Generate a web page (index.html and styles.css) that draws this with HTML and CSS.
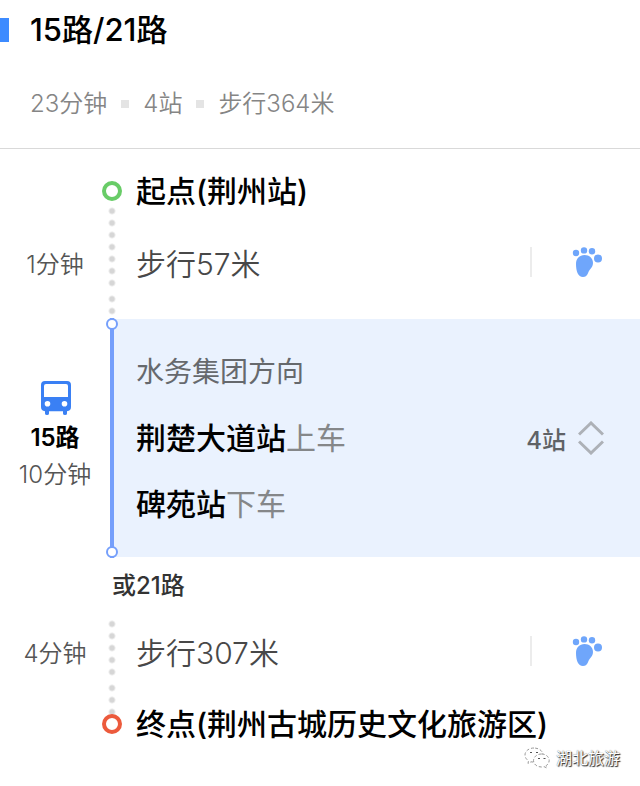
FILE: index.html
```html
<!DOCTYPE html>
<html lang="zh-CN">
<head>
    <meta charset="UTF-8">
    <meta name="viewport" content="width=device-width, initial-scale=1.0">
    <title>15路/21路</title>
    <link rel="stylesheet" href="styles.css">
</head>
<body>
    <header class="summary">
        <h1 class="title">15路/21路</h1>
        <ul class="facts">
            <li>23分钟</li>
            <li>4站</li>
            <li>步行364米</li>
        </ul>
    </header>

    <main class="route">
        <!-- Walk to the first stop -->
        <section class="leg leg-start">
            <div class="track">
                <span class="ring ring-start"></span>
                <span class="dots dots-7"></span>
                <span class="dots dots-2"></span>
            </div>
            <h2 class="place">起点(荆州站)</h2>
            <span class="time">1分钟</span>
            <div class="walk">
                <span>步行57米</span>
                <button type="button" class="foot" aria-label="步行57米">
                    <svg width="32" height="32" viewBox="0 0 32 32">
                        <circle cx="4" cy="7" r="3.2"/>
                        <circle cx="12" cy="4.4" r="3.2"/>
                        <circle cx="20" cy="5.2" r="3.2"/>
                        <circle cx="26" cy="12.4" r="4"/>
                        <path d="M12.5 9C17.5 9 21 12.3 21 17C21 20 19.5 21.8 17.8 23.8C15.8 26 16 31 11 31C6 31 4 25 4 18C4 12.5 7.5 9 12.5 9Z"/>
                    </svg>
                </button>
            </div>
        </section>

        <!-- Bus ride -->
        <section class="ride">
            <div class="line">
                <svg width="32" height="34" viewBox="-1 0 32 34">
                    <path fill-rule="evenodd" d="M5 0H27Q31 0 31 4V26Q31 30 27 30.200V32.500Q27 34 25 34Q23 34 23 32.500V30.200H9V32.500Q9 34 7 34Q5 34 5 32.500V30.200Q1 30 1 26V4Q1 0 5 0ZM6 3Q4 3 4 5V16H28V5Q28 3 26 3ZM7.500 20A2.800 2.800 0 1 0 7.500 25.600A2.800 2.800 0 1 0 7.500 20ZM24.500 20A2.800 2.800 0 1 0 24.500 25.600A2.800 2.800 0 1 0 24.500 20Z"/>
                </svg>
                <strong>15路</strong>
                <span>10分钟</span>
            </div>
            <div class="panel">
                <div class="stops">
                    <p class="direction">水务集团方向</p>
                    <p><b>荆楚大道站</b>上车</p>
                    <p><b>碑苑站</b>下车</p>
                </div>
                <button type="button" class="expand">
                    4站
                    <svg width="26" height="34" viewBox="0 0 26 34">
                        <path d="M1 13.500L13 2L25 13.500M1 20.500L13 32L25 20.500"/>
                    </svg>
                </button>
            </div>
            <div class="rail"></div>
        </section>
        <p class="other">或21路</p>

        <!-- Walk to the destination -->
        <section class="leg leg-end">
            <div class="track">
                <span class="dots dots-5"></span>
                <span class="dots dots-3"></span>
                <span class="ring ring-end"></span>
            </div>
            <span class="time">4分钟</span>
            <div class="walk">
                <span>步行307米</span>
                <button type="button" class="foot" aria-label="步行307米">
                    <svg width="32" height="32" viewBox="0 0 32 32">
                        <circle cx="4" cy="7" r="3.2"/>
                        <circle cx="12" cy="4.4" r="3.2"/>
                        <circle cx="20" cy="5.2" r="3.2"/>
                        <circle cx="26" cy="12.4" r="4"/>
                        <path d="M12.5 9C17.5 9 21 12.3 21 17C21 20 19.5 21.8 17.8 23.8C15.8 26 16 31 11 31C6 31 4 25 4 18C4 12.5 7.5 9 12.5 9Z"/>
                    </svg>
                </button>
            </div>
            <h2 class="place">终点(荆州古城历史文化旅游区)</h2>
        </section>
    </main>

    <div class="watermark">
        <svg width="26" height="22" viewBox="0 0 26 22">
            <path class="bubble" d="M10 1C5 1 1 4 1 8C1 10.500 2.500 12.500 4.500 13.700L4 16.500L7 14.800L10 15.200C15 15.200 19 12 19 8C19 4 15 1 10 1Z"/>
            <path class="bubble" d="M17.500 7C13 7 9.500 10 9.500 13.500C9.500 17.200 13 20 17.500 20L20 19.600L22.800 21L22.200 18.600C24 17.500 25.200 15.600 25.200 13.500C25.200 10 22 7 17.500 7Z"/>
            <path class="eyes" d="M6 5.500H8M12 5.500H14M14 11.500H16M19.500 11.500H21.500"/>
        </svg>
        湖北旅游
    </div>
</body>
</html>
```
FILE: styles.css
```css
*,
*::before,
*::after {
    box-sizing: border-box;
}

body {
    position: relative;
    min-height: 100vh;
    margin: 0;
    background-color: #fff;
    color: #000;
    font-family: Inter, "Noto Sans CJK SC", sans-serif;
    font-size: 24px;
}

h1,
h2,
p,
ul {
    margin: 0;
    padding: 0;
}

button {
    display: flex;
    align-items: center;
    padding: 0;
    border: none;
    background: none;
    font: inherit;
    cursor: pointer;
}

.summary {
    padding: 12px 0 24px;
    border-bottom: 1px solid #d9d9d9;
}

.title {
    display: flex;
    align-items: center;
    gap: 21px;
    font-size: 31px;
    font-weight: 500;
    line-height: 36px;
}

.title::before {
    content: "";
    width: 9px;
    height: 24px;
    background-color: #3d8bff;
}

.facts {
    display: flex;
    margin-top: 36px;
    padding-left: 30px;
    color: #858585;
    font-weight: 350;
    line-height: 40px;
    list-style: none;
}

.facts li {
    display: flex;
    align-items: center;
}

.facts li + li::before {
    content: "";
    width: 8px;
    height: 8px;
    margin: 0 14px;
    background-color: #e4e4e4;
}

/* Shared columns: time, track, text */
.leg,
.ride {
    display: grid;
    grid-template-columns: 102px 20px 1fr;
}

.leg {
    align-items: center;
}

.leg-start {
    grid-template-rows: 80px 66px 24px;
}

.leg-end {
    grid-template-rows: 72px 70px;
}

.track {
    display: flex;
    flex-direction: column;
    align-items: center;
    align-self: start;
    grid-column: 2;
    grid-row: 1 / -1;
    gap: 4px;
}

.leg-start .track {
    padding-top: 32px;
}

.leg-end .track {
    padding-top: 3px;
}

.ring {
    width: 20px;
    height: 20px;
    border: 4px solid #68cc67;
    border-radius: 50%;
    background-color: #fff;
}

.ring-end {
    margin-top: -8px;
    border-color: #ec5a3c;
}

.dots {
    width: 12px;
    background-image: radial-gradient(circle, #d6d6d6 2px, transparent 4px);
    background-size: 12px 12px;
}

.dots-2 {
    height: 24px;
}

.dots-3 {
    height: 36px;
}

.dots-5 {
    height: 60px;
}

.dots-7 {
    height: 84px;
}

.place {
    grid-column: 3;
    padding-left: 14px;
    font-size: 30px;
    font-weight: 500;
}

.time {
    grid-column: 1;
    padding-left: 8px;
    color: #555;
    font-weight: 350;
    text-align: center;
}

.walk {
    display: flex;
    align-items: center;
    justify-content: space-between;
    grid-column: 3;
    padding: 0 36px 0 14px;
    color: #484848;
    font-size: 30px;
    font-weight: 350;
}

.foot {
    height: 30px;
    padding-left: 40px;
    border-left: 2px solid #ececec;
}

.foot svg {
    fill: #6fa6fb;
}

.line {
    display: flex;
    flex-direction: column;
    align-items: center;
    align-self: center;
    grid-column: 1;
    padding: 0 0 2px 8px;
    color: #555;
    font-weight: 350;
    line-height: 37px;
}

.line svg {
    margin-bottom: 4px;
    fill: #3a80f4;
}

.line strong {
    color: #000;
    font-weight: 600;
}

.panel {
    display: flex;
    align-items: center;
    justify-content: space-between;
    grid-column: 2 / 4;
    grid-row: 1;
    margin-left: 10px;
    padding: 20px 36px 20px 24px;
    background-color: #eaf2fe;
}

.stops {
    color: #858789;
    font-size: 30px;
    line-height: 66px;
}

.stops b {
    color: #000;
    font-weight: 500;
}

.stops .direction {
    color: #66696d;
    font-size: 28px;
}

.expand {
    gap: 12px;
    color: #5f6266;
    font-weight: 500;
}

.expand svg {
    fill: none;
    stroke: #adb1b7;
    stroke-width: 3;
}

.rail {
    display: flex;
    flex-direction: column;
    align-items: center;
    justify-content: space-between;
    grid-column: 2;
    grid-row: 1;
    margin: -1px 4px;
    background: linear-gradient(#759ffb, #759ffb) center / 4px 100% no-repeat;
}

.rail::before,
.rail::after {
    content: "";
    width: 12px;
    height: 12px;
    border: 2px solid #759ffb;
    border-radius: 50%;
    background-color: #fff;
}

.other {
    padding: 14px 0 14px 112px;
    color: #333;
    font-weight: 500;
    line-height: 30px;
}

/* Account mark laid over the bottom corner */
.watermark {
    position: absolute;
    right: 20px;
    bottom: 16px;
    display: flex;
    align-items: center;
    gap: 6px;
    color: #fff;
    font-size: 16px;
    line-height: 24px;
    text-shadow: 1px 1px 1px #222, 0 0 1px #555;
}

.bubble {
    fill: #fff;
    stroke: #999;
    stroke-dasharray: 3 2;
}

.eyes {
    stroke: #555;
    stroke-width: 1;
}
```
